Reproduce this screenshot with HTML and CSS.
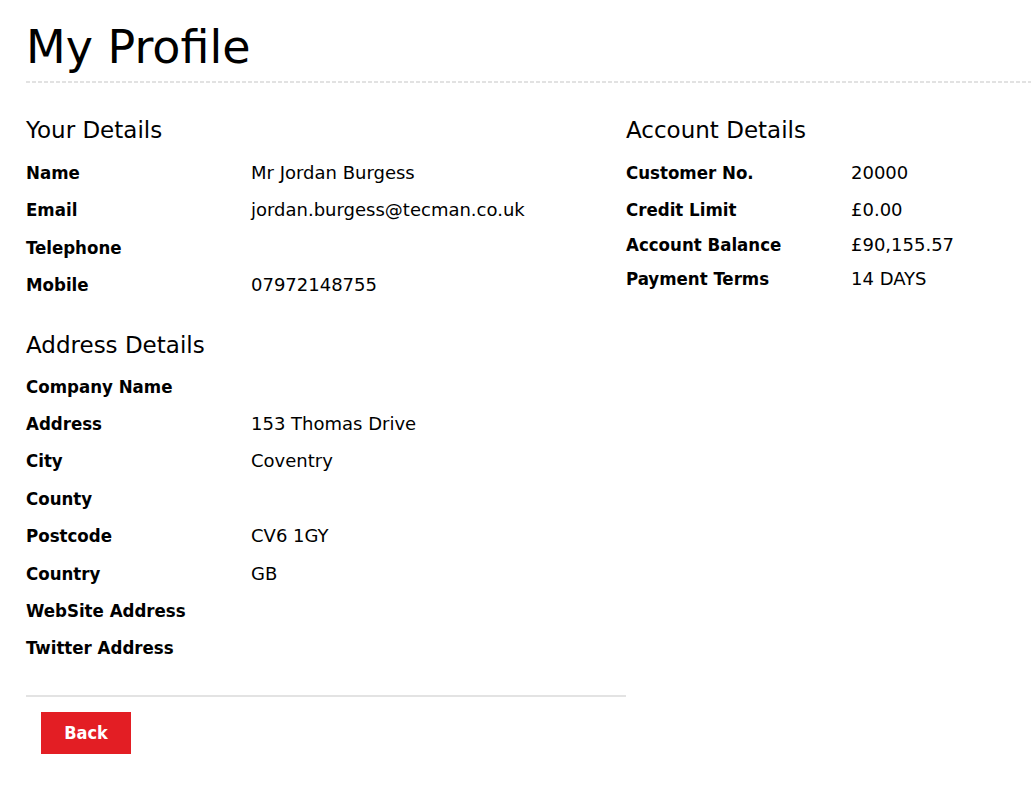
FILE: index.html
```html
<!DOCTYPE html>
<html lang="en">
<head>
<meta charset="utf-8">
<title>My Profile</title>
<link rel="stylesheet" href="styles.css">
</head>
<body>
<div class="page">
  <h1 class="page-title">My Profile</h1>
  <div class="columns">
    <div class="col col-main">
      <section class="block">
        <h2 class="block-title">Your Details</h2>
        <div class="rows">
          <div class="row"><span class="label">Name</span><span class="value">Mr Jordan Burgess</span></div>
          <div class="row"><span class="label">Email</span><span class="value">jordan.burgess@tecman.co.uk</span></div>
          <div class="row"><span class="label">Telephone</span><span class="value"></span></div>
          <div class="row"><span class="label">Mobile</span><span class="value">07972148755</span></div>
        </div>
      </section>
      <section class="block block-address">
        <h2 class="block-title">Address Details</h2>
        <div class="rows">
          <div class="row"><span class="label">Company Name</span><span class="value"></span></div>
          <div class="row"><span class="label">Address</span><span class="value">153 Thomas Drive</span></div>
          <div class="row"><span class="label">City</span><span class="value">Coventry</span></div>
          <div class="row"><span class="label">County</span><span class="value"></span></div>
          <div class="row"><span class="label">Postcode</span><span class="value">CV6 1GY</span></div>
          <div class="row"><span class="label">Country</span><span class="value">GB</span></div>
          <div class="row"><span class="label">WebSite Address</span><span class="value"></span></div>
          <div class="row"><span class="label">Twitter Address</span><span class="value"></span></div>
        </div>
      </section>
      <div class="actions">
        <button class="btn-back" type="button">Back</button>
      </div>
    </div>
    <div class="col col-side">
      <section class="block">
        <h2 class="block-title">Account Details</h2>
        <div class="rows rows-compact">
          <div class="row"><span class="label">Customer No.</span><span class="value">20000</span></div>
          <div class="row"><span class="label">Credit Limit</span><span class="value">£0.00</span></div>
          <div class="row"><span class="label">Account Balance</span><span class="value">£90,155.57</span></div>
          <div class="row"><span class="label">Payment Terms</span><span class="value">14 DAYS</span></div>
        </div>
      </section>
    </div>
  </div>
</div>
</body>
</html>
```

FILE: styles.css
```css
* { box-sizing: border-box; }

html, body {
  margin: 0;
  padding: 0;
  background: #ffffff;
}

body {
  font-family: "DejaVu Sans", "Liberation Sans", sans-serif;
  color: #000000;
}

.page {
  padding-left: 26px;
}

.page-title {
  margin: 21px 0 0 0;
  padding-bottom: 8px;
  font-size: 46px;
  line-height: 52px;
  font-weight: normal;
  position: relative;
}

.page-title::after {
  content: "";
  display: block;
  height: 2px;
  position: absolute;
  left: 0;
  right: 0;
  bottom: -2px;
  background: repeating-linear-gradient(90deg, #e2e2e2 0 4px, transparent 4px 6px);
}

.columns {
  display: flex;
  margin-top: 36px;
}

.col-main {
  flex: 0 0 600px;
}

.col-side {
  flex: 1 1 auto;
  min-width: 0;
}

.block-title {
  margin: 0 0 11px 0;
  font-size: 23px;
  line-height: 26px;
  font-weight: normal;
}

.block-address {
  margin-top: 28px;
}

.block-address .block-title {
  margin-bottom: 10px;
}

.rows {
  display: flex;
  flex-direction: column;
}

.row {
  display: grid;
  grid-template-columns: 225px 1fr;
  padding: 6px 0;
  line-height: 25.4px;
  font-size: 18px;
}

.rows-compact .row {
  padding: 4.6px 0;
}

.rows-compact .row:first-child {
  padding-top: 6px;
  padding-bottom: 7px;
}

.label {
  font-family: "DejaVu Sans Condensed", "DejaVu Sans", sans-serif;
  font-stretch: condensed;
  font-weight: bold;
  font-size: 18.5px;
}

.value {
  font-weight: normal;
}

.actions {
  margin-top: 28px;
  border-top: 2px solid #e3e3e3;
  padding: 15px 0 0 15px;
}

.btn-back {
  display: block;
  width: 90px;
  height: 42px;
  border: 0;
  border-radius: 0;
  background: #e31e24;
  color: #ffffff;
  font-family: "DejaVu Sans Condensed", "DejaVu Sans", sans-serif;
  font-stretch: condensed;
  font-weight: bold;
  font-size: 18px;
  padding: 0;
  cursor: pointer;
}
```
